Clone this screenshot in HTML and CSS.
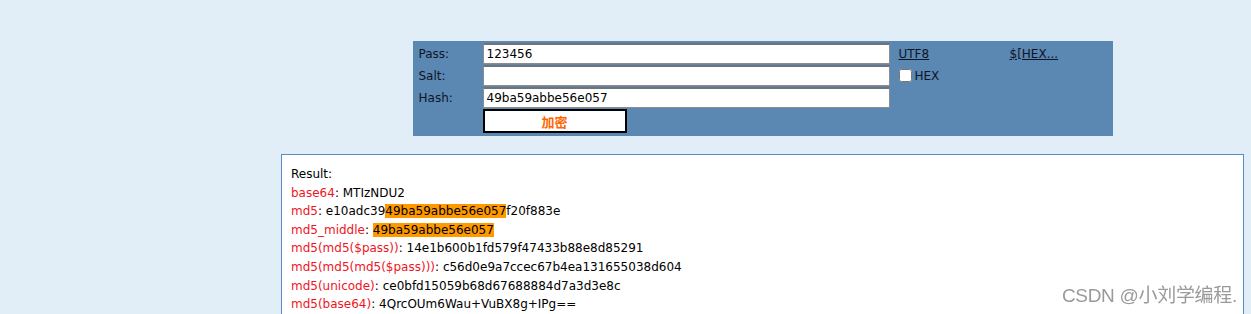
FILE: index.html
```html
<!DOCTYPE html>
<html lang="en">
<head>
    <meta charset="UTF-8">
    <meta name="viewport" content="width=device-width, initial-scale=1.0">
    <title>MD5</title>
    <link rel="stylesheet" href="styles.css">
</head>
<body>

<div class="wrapper">
    <!-- Input panel -->
    <div class="panel">
        <div class="label">Pass:</div>
        <div class="field"><input type="text" class="txt" value="123456"></div>
        <div class="opt"><a href="#">UTF8</a></div>
        <div class="opt"><a href="#">$[HEX...</a></div>

        <div class="label">Salt:</div>
        <div class="field"><input type="text" class="txt" value=""></div>
        <div class="opt"><label class="chk"><input type="checkbox"> HEX</label></div>
        <div class="opt"></div>

        <div class="label">Hash:</div>
        <div class="field"><input type="text" class="txt" value="49ba59abbe56e057"></div>
        <div class="opt"></div>
        <div class="opt"></div>

        <div class="label"></div>
        <div class="field"><button class="btn">加密</button></div>
        <div class="opt"></div>
        <div class="opt"></div>
    </div>

    <!-- Result -->
    <div class="result">
        <div class="line">Result:</div>
        <div class="line"><span class="key">base64</span>: MTIzNDU2</div>
        <div class="line"><span class="key">md5</span>: e10adc39<span class="hit">49ba59abbe56e057</span>f20f883e</div>
        <div class="line"><span class="key">md5_middle</span>: <span class="hit">49ba59abbe56e057</span></div>
        <div class="line"><span class="key">md5(md5($pass))</span>: 14e1b600b1fd579f47433b88e8d85291</div>
        <div class="line"><span class="key">md5(md5(md5($pass)))</span>: c56d0e9a7ccec67b4ea131655038d604</div>
        <div class="line"><span class="key">md5(unicode)</span>: ce0bfd15059b68d67688884d7a3d3e8c</div>
        <div class="line"><span class="key">md5(base64)</span>: 4QrcOUm6Wau+VuBX8g+IPg==</div>
    </div>
</div>

<div class="watermark">CSDN @小刘学编程.</div>

</body>
</html>
```

FILE: styles.css
```css
/* General styles */
body {
    font-family: "DejaVu Sans", Verdana, sans-serif;
    font-size: 12px;
    background-color: #e1eef8;
    margin: 0;
    padding: 0;
    color: #000;
}

.wrapper {
    margin: 41px 0 0 281px;
    width: 963px;
}

/* Input panel */
.panel {
    width: 700px;
    box-sizing: border-box;
    margin: 0 auto;
    background-color: #5b87b3;
    padding: 2px 6px 3px 6px;
    display: grid;
    grid-template-columns: 64px 416px 111px 1fr;
    grid-template-rows: 21px 21px 21px 24px;
    row-gap: 1px;
    align-items: center;
    color: #0d1526;
}

.field {
    height: 100%;
}

.txt {
    display: block;
    box-sizing: border-box;
    width: 407px;
    height: 21px;
    margin: 0;
    padding: 0 3px;
    border: 1px solid #8c8c8c;
    border-top: 2px solid #737373;
    background: #fff;
    font-family: "DejaVu Sans", Verdana, sans-serif;
    font-size: 12px;
    color: #000;
    outline: none;
}

.opt a {
    color: #0d1526;
    text-decoration: underline;
}

.chk {
    display: flex;
    align-items: center;
    gap: 3px;
}

.chk input {
    margin: 0;
    width: 13px;
    height: 13px;
}

.btn {
    display: block;
    box-sizing: border-box;
    width: 144px;
    height: 24px;
    margin: 0;
    padding: 0;
    background: #fff;
    border: 2px solid #000;
    color: #ff6600;
    font-family: "Noto Sans CJK SC", sans-serif;
    font-size: 13px;
    font-weight: bold;
}

/* Result box */
.result {
    margin-top: 18px;
    background-color: #fff;
    border: 1px solid #5a8bc4;
    padding: 10px 9px 20px 9px;
    line-height: 18.6px;
}

.key {
    color: #f0141e;
}

.hit {
    background-color: #ff9900;
}

/* Watermark */
.watermark {
    position: fixed;
    right: 14px;
    bottom: 7px;
    font-family: "Liberation Sans", "Noto Sans CJK SC", sans-serif;
    font-size: 19px;
    color: #9a9a9a;
    text-shadow: 0 0 2px #fff;
    letter-spacing: -0.3px;
}
```
